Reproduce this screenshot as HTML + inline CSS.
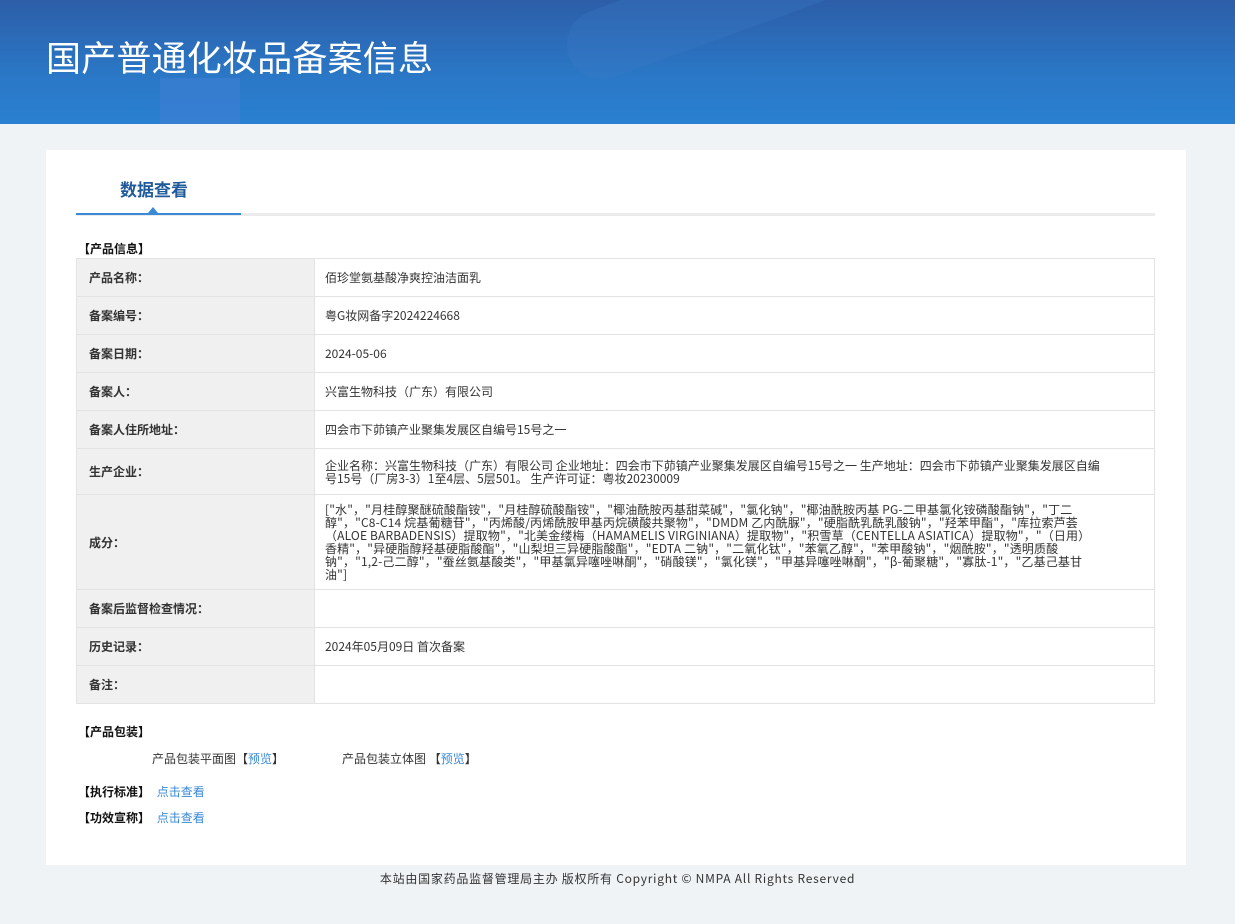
<!DOCTYPE html>
<html><head><meta charset="utf-8"><style>
*{margin:0;padding:0;box-sizing:border-box}
body{width:1235px;height:924px;background:#eff3f6;font-family:"Noto Sans CJK SC","Liberation Sans",sans-serif;font-size:12px;color:#333;position:relative;overflow:hidden}
.hdr{position:absolute;left:0;top:0;width:1235px;height:124px;background:linear-gradient(180deg,#2d5ea8 0%,#2a77c6 60%,#2a80d0 100%);overflow:hidden}
.hdr .b1{position:absolute;left:160px;top:78px;width:80px;height:50px;background:#3f7fd4;opacity:.6}
.hdr .b3{position:absolute;left:560px;top:-30px;width:300px;height:70px;border-radius:35px;background:#3a7cc8;opacity:.3;transform:rotate(-20deg)}
.hdr h1{position:absolute;left:46px;top:31px;color:#fff;font-size:35px;font-weight:normal;letter-spacing:0.2px}
.card{position:absolute;left:46px;top:150px;width:1140px;height:715px;background:#fff}
.tab{position:absolute;left:120px;top:176px;font-size:17px;font-weight:bold;color:#1f5a9a}
.line{position:absolute;left:76px;top:213px;width:1079px;height:3px;background:#ebebeb}
.line2{position:absolute;left:76px;top:213px;width:165px;height:2px;background:#3a8ad6}
.tri{position:absolute;left:148px;top:207px;width:0;height:0;border-left:5px solid transparent;border-right:5px solid transparent;border-bottom:6px solid #3a8ad6}
.sec{position:absolute;font-weight:bold;color:#111;font-size:12px}
table{position:absolute;left:76px;top:258px;width:1079px;border-collapse:collapse;border:1px solid #9cbbe6}
td{border:1px solid #e3e3e3;font-size:12px;padding:0 10px;vertical-align:middle}
td.l{width:238px;background:#f0f0f0;font-weight:bold;color:#333;padding-left:12px}
td.v{color:#333;line-height:13px}
a{color:#3a8ad6;text-decoration:none}
.foot{position:absolute;top:870px;left:0;width:1235px;text-align:center;font-size:12px;color:#333;letter-spacing:0.75px}
</style></head><body>
<div class="hdr"><div class="b3"></div><div class="b1"></div><h1>国产普通化妆品备案信息</h1></div>
<div class="card"></div>
<div class="tab">数据查看</div>
<div class="line"></div><div class="line2"></div><div class="tri"></div>
<div class="sec" style="left:78px;top:240px">【产品信息】</div>
<table>
<tr style="height:38px"><td class="l">产品名称：</td><td class="v">佰珍堂氨基酸净爽控油洁面乳</td></tr>
<tr style="height:38px"><td class="l">备案编号：</td><td class="v">粤G妆网备字2024224668</td></tr>
<tr style="height:38px"><td class="l">备案日期：</td><td class="v">2024-05-06</td></tr>
<tr style="height:38px"><td class="l">备案人：</td><td class="v">兴富生物科技（广东）有限公司</td></tr>
<tr style="height:38px"><td class="l">备案人住所地址：</td><td class="v">四会市下茆镇产业聚集发展区自编号15号之一</td></tr>
<tr style="height:46px"><td class="l">生产企业：</td><td class="v"><div style="width:780px">企业名称：兴富生物科技（广东）有限公司 企业地址：四会市下茆镇产业聚集发展区自编号15号之一 生产地址：四会市下茆镇产业聚集发展区自编号15号（厂房3-3）1至4层、5层501。 生产许可证：粤妆20230009</div></td></tr>
<tr style="height:95px"><td class="l">成分：</td><td class="v"><div style="width:775px;font-size:12px;line-height:13px;letter-spacing:0.15px">["水"，"月桂醇聚醚硫酸酯铵"，"月桂醇硫酸酯铵"，"椰油酰胺丙基甜菜碱"，"氯化钠"，"椰油酰胺丙基 PG-二甲基氯化铵磷酸酯钠"，"丁二醇"，"C8-C14 烷基葡糖苷"，"丙烯酸/丙烯酰胺甲基丙烷磺酸共聚物"，"DMDM 乙内酰脲"，"硬脂酰乳酰乳酸钠"，"羟苯甲酯"，"库拉索芦荟（ALOE BARBADENSIS）提取物"，"北美金缕梅（HAMAMELIS VIRGINIANA）提取物"，"积雪草（CENTELLA ASIATICA）提取物"，"（日用）香精"，"异硬脂醇羟基硬脂酸酯"，"山梨坦三异硬脂酸酯"，"EDTA 二钠"，"二氧化钛"，"苯氧乙醇"，"苯甲酸钠"，"烟酰胺"，"透明质酸钠"，"1,2-己二醇"，"蚕丝氨基酸类"，"甲基氯异噻唑啉酮"，"硝酸镁"，"氯化镁"，"甲基异噻唑啉酮"，"β-葡聚糖"，"寡肽-1"，"乙基己基甘油"]</div></td></tr>
<tr style="height:38px"><td class="l">备案后监督检查情况：</td><td class="v"></td></tr>
<tr style="height:38px"><td class="l">历史记录：</td><td class="v">2024年05月09日 首次备案</td></tr>
<tr style="height:38px"><td class="l">备注：</td><td class="v"></td></tr>
</table>
<div class="sec" style="left:78px;top:723px">【产品包装】</div>
<div style="position:absolute;left:152px;top:750px">产品包装平面图【<a>预览</a>】</div>
<div style="position:absolute;left:342px;top:750px">产品包装立体图 【<a>预览</a>】</div>
<div class="sec" style="left:78px;top:783px">【执行标准】 <a style="font-weight:normal;margin-left:4px">点击查看</a></div>
<div class="sec" style="left:78px;top:809px">【功效宣称】 <a style="font-weight:normal;margin-left:4px">点击查看</a></div>
<div class="foot">本站由国家药品监督管理局主办 版权所有 Copyright © NMPA All Rights Reserved</div>
</body></html>
